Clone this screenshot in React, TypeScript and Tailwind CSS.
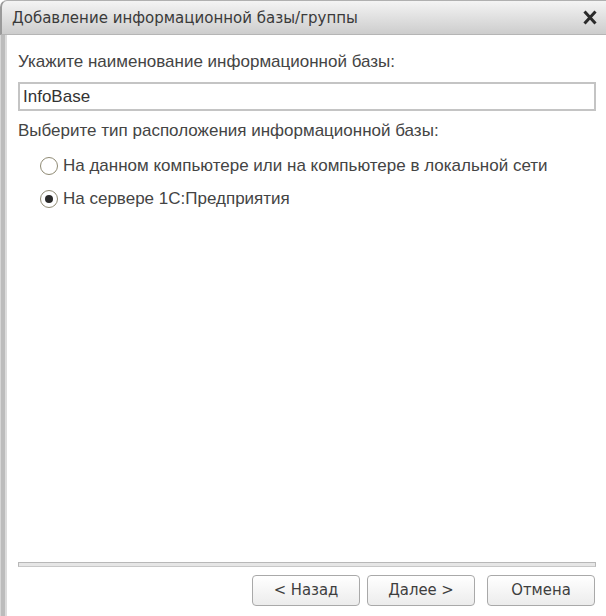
import React from "react";

const body = { fontFamily: '"Liberation Sans", Arial, sans-serif' };
const cond = { fontFamily: '"DejaVu Sans Condensed", "Liberation Sans Narrow", sans-serif' };

function Radio({ checked }: { checked?: boolean }) {
  return (
    <span className="w-[18px] h-[18px] rounded-full border border-[#8f8a74] bg-white flex items-center justify-center shrink-0">
      {checked && <span className="w-[8px] h-[8px] rounded-full bg-[#2a2a2a]" />}
    </span>
  );
}

function Btn({ children, className }: { children: React.ReactNode; className?: string }) {
  return (
    <button
      className={`w-[108px] h-[31px] rounded-[4px] border border-[#a9a9a9] bg-gradient-to-b from-[#ffffff] to-[#ececec] text-[16.5px] text-[#3e3e3e] flex items-center justify-center ${className ?? ""}`}
      style={cond}
    >
      {children}
    </button>
  );
}

export default function App() {
  return (
    <div className="w-[606px] h-[616px] overflow-hidden bg-white flex flex-col">
      <div className="h-[35px] shrink-0 rounded-tl-[7px] border-l-[2px] border-t border-b border-l-[#9a9a9a] border-t-[#b0b0b0] border-b-[#b5b5b5] bg-gradient-to-b from-[#f4f4f4] to-[#cdcdcd] flex items-center pl-[10px] pr-[9px]">
        <span className="text-[16.7px] text-[#3a3a3a] flex-1" style={cond}>
          Добавление информационной базы/группы
        </span>
        <svg width="14" height="15" viewBox="0 0 14 15">
          <path d="M1.5 1.5 L12.5 13.5 M12.5 1.5 L1.5 13.5" stroke="#2a2a2a" strokeWidth="3" />
        </svg>
      </div>
      <div className="flex-1 flex">
        <div className="w-[7px] shrink-0 flex">
          <div className="w-[1px] bg-[#d6d6d6]" />
          <div className="w-[4px] bg-[#bcbcbc]" />
          <div className="w-[2px] bg-[#dcdcdc]" />
        </div>
        <div className="flex-1 flex flex-col pl-[11px] pr-[10px] pt-[17px] pb-[10px] text-[17px] text-[#444444]" style={body}>
          <div className="leading-[20px]">Укажите наименование информационной базы:</div>
          <div className="mt-[10px] h-[29px] border-[2px] border-[#c4c4c4] flex items-center pl-[3px] text-[#333]">
            InfoBase
          </div>
          <div className="mt-[10px] leading-[20px]">Выберите тип расположения информационной базы:</div>
          <div className="mt-[15px] ml-[22px] flex items-center gap-[5px] h-[20px]">
            <Radio />
            <span>На данном компьютере или на компьютере в локальной сети</span>
          </div>
          <div className="mt-[13px] ml-[22px] flex items-center gap-[5px] h-[20px]">
            <Radio checked />
            <span>На сервере 1С:Предприятия</span>
          </div>
          <div className="flex-1" />
          <div className="h-[5px] border border-[#b8b8b8] bg-[#e6e6e6] border-b-[#c8c8c8]" />
          <div className="mt-[8px] flex justify-end mr-[1px]">
            <Btn>&lt; Назад</Btn>
            <Btn className="ml-[7px] w-[107px]">Далее &gt;</Btn>
            <Btn className="ml-[12px]">Отмена</Btn>
          </div>
        </div>
      </div>
    </div>
  );
}
